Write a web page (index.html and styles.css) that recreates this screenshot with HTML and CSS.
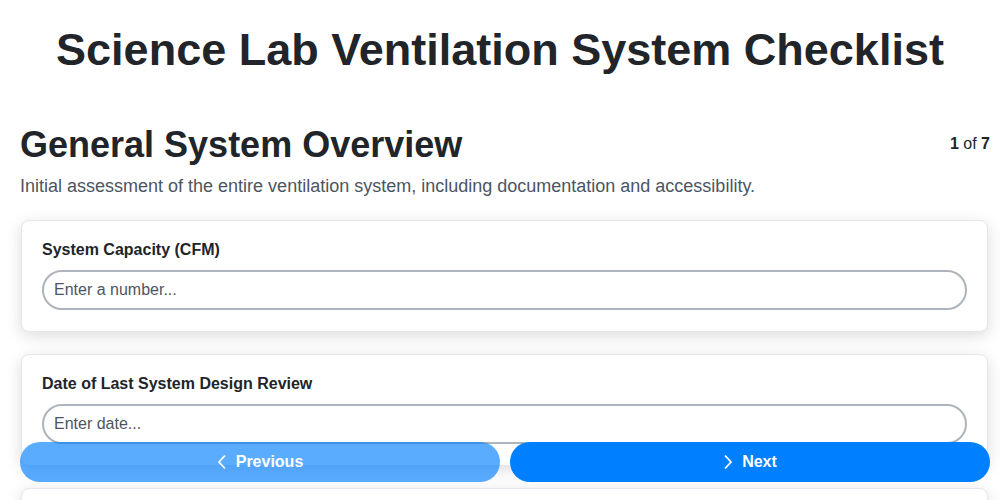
FILE: index.html
```html
<!DOCTYPE html>
<html lang="en">
<head>
    <meta charset="UTF-8">
    <meta name="viewport" content="width=device-width, initial-scale=1.0">
    <title>Science Lab Ventilation System Checklist</title>
    <link rel="stylesheet" href="styles.css">
</head>
<body>
    <h1 class="page-title">Science Lab Ventilation System Checklist</h1>

    <div class="section">
        <div class="section-head">
            <h2>General System Overview</h2>
            <div class="step"><strong>1</strong> of <strong>7</strong></div>
        </div>
        <p class="section-desc">Initial assessment of the entire ventilation system, including documentation and accessibility.</p>

        <div class="card">
            <label class="field-label">System Capacity (CFM)</label>
            <input class="field-input" type="text" placeholder="Enter a number...">
        </div>

        <div class="card">
            <label class="field-label">Date of Last System Design Review</label>
            <input class="field-input" type="text" placeholder="Enter date...">
        </div>

        <div class="card">
            <label class="field-label">Ventilation System Type</label>
            <input class="field-input" type="text" placeholder="Enter text...">
        </div>
    </div>

    <div class="nav">
        <button class="nav-btn prev" disabled>
            <svg width="10" height="16" viewBox="0 0 10 16"><path d="M8 1.5 L2 8 L8 14.5" fill="none" stroke="#fff" stroke-width="1.8"/></svg>
            Previous
        </button>
        <button class="nav-btn next">
            <svg width="10" height="16" viewBox="0 0 10 16"><path d="M2 1.5 L8 8 L2 14.5" fill="none" stroke="#fff" stroke-width="1.8"/></svg>
            Next
        </button>
    </div>
</body>
</html>
```

FILE: styles.css
```css
body {
    font-family: "Liberation Sans", Arial, sans-serif;
    color: #212529;
    background-color: #fff;
    margin: 0;
    padding: 0 10px 0 20px;
}

.page-title {
    font-size: 45px;
    text-align: center;
    margin: 25px -10px 48px -20px;
    line-height: 1.1;
}

.section-head {
    display: flex;
    justify-content: space-between;
    align-items: center;
}

.section-head h2 {
    font-size: 36px;
    margin: 0;
    line-height: 1.2;
}

.step {
    font-size: 16px;
}

.section-desc {
    font-size: 18px;
    color: #4b5563;
    margin: 10px 0 23px;
}

.card {
    background-color: #fff;
    border: 1px solid #e6e6ec;
    border-radius: 8px;
    box-shadow: 0 4px 16px rgba(0, 0, 0, 0.14);
    padding: 20px 20px 21px 20px;
    margin: 0 2px 22px 1px;
}

.field-label {
    display: block;
    font-size: 16px;
    font-weight: bold;
    margin-bottom: 11px;
}

.field-input {
    box-sizing: border-box;
    width: 100%;
    height: 40px;
    border: 2px solid #aeb4bb;
    border-radius: 20px;
    padding: 0 10px;
    font-family: inherit;
    font-size: 16px;
    color: #212529;
}

.field-input::placeholder {
    color: #4f5560;
}

.nav {
    position: fixed;
    left: 20px;
    right: 10px;
    bottom: 18px;
    display: flex;
    gap: 10px;
}

.nav-btn {
    flex: 1;
    height: 40px;
    border: none;
    border-radius: 20px;
    background-color: #0080ff;
    color: #fff;
    font-family: inherit;
    font-size: 16px;
    font-weight: bold;
    display: flex;
    justify-content: center;
    align-items: center;
    gap: 9px;
}

.nav-btn.prev {
    opacity: 0.65;
}
```
